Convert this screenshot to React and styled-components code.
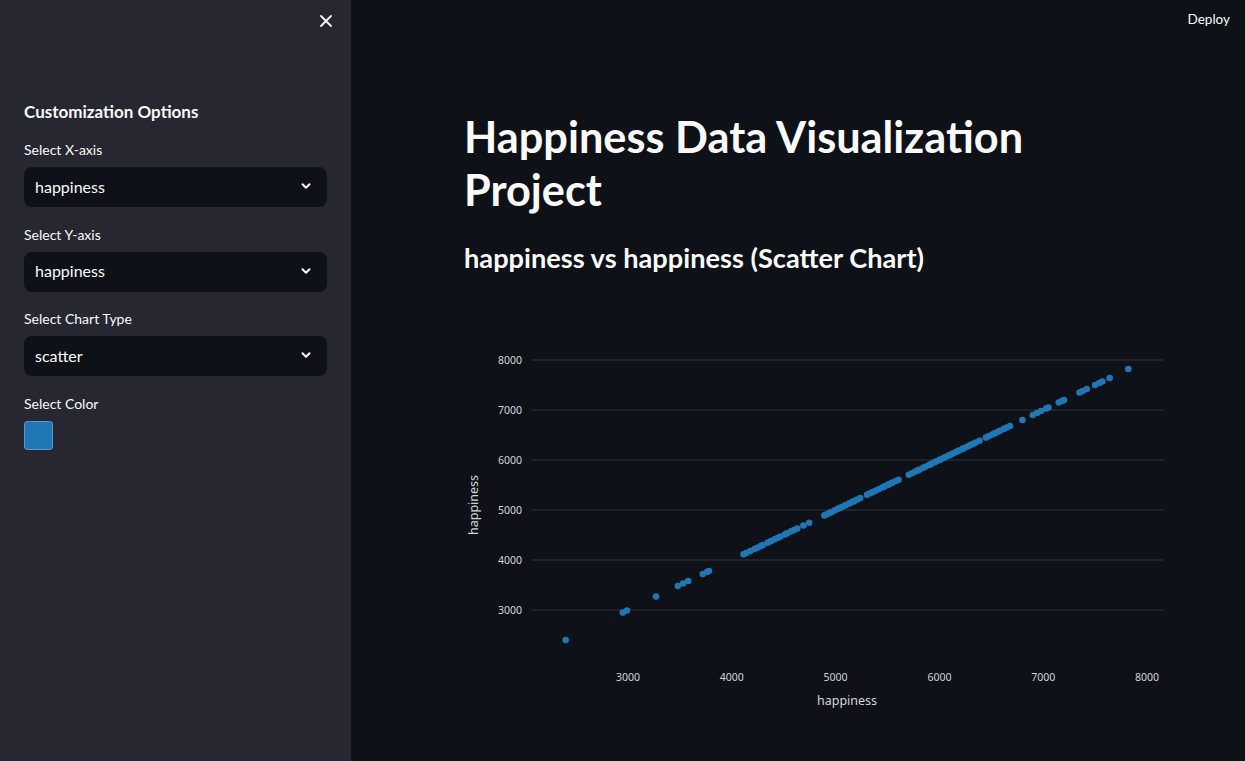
import React from "react";
import styled, { createGlobalStyle } from "styled-components";

const Global = createGlobalStyle`
  html, body { margin: 0; padding: 0; background: #0e1117; }
  body { font-family: "Source Sans Pro", Lato, "Noto Sans", sans-serif; color: #fafafa; }
  * { box-sizing: border-box; }
`;

const Page = styled.div`
  display: flex;
  width: 1245px;
  height: 761px;
  overflow: hidden;
`;

const Sidebar = styled.aside`
  width: 351px;
  flex: none;
  background: #262730;
  display: flex;
  flex-direction: column;
  padding: 0 24px;
`;

const SideTop = styled.div`
  height: 42px;
  display: flex;
  justify-content: flex-end;
  align-items: center;
`;

const CloseBtn = styled.button`
  background: none;
  border: 0;
  padding: 0;
  width: 16px;
  height: 16px;
  margin-right: -7px;
  display: flex;
  align-items: center;
  justify-content: center;
  color: #fafafa;
`;

const SideHeading = styled.h2`
  margin: 56px 0 0;
  font-size: 17px;
  font-weight: 700;
  line-height: 28px;
`;

const Fields = styled.div`
  margin-top: 14px;
  display: flex;
  flex-direction: column;
  gap: 17.7px;
`;

const Field = styled.div`
  display: flex;
  flex-direction: column;
`;

const Label = styled.label`
  font-size: 14px;
  line-height: 20px;
  margin-bottom: 7px;
  color: #fafafa;
`;

const Select = styled.div`
  height: 40px;
  border-radius: 8px;
  background: #0e1117;
  display: flex;
  align-items: center;
  justify-content: space-between;
  padding: 0 15px 2px 11px;
  font-size: 16px;
  color: #fafafa;
`;

const Swatch = styled.div`
  width: 29px;
  height: 29px;
  border-radius: 4px;
  background: ${(p) => p.$color};
  border: 1px solid rgba(255, 255, 255, 0.25);
`;

const Main = styled.main`
  flex: 1;
  position: relative;
  background: #0e1117;
  display: flex;
  flex-direction: column;
`;

const Header = styled.header`
  height: 38px;
  display: flex;
  justify-content: flex-end;
  align-items: center;
  padding-right: 15px;
`;

const DeployBtn = styled.span`
  font-size: 13.5px;
  color: #fafafa;
`;

const Content = styled.div`
  margin-left: 113px;
  width: 704px;
  display: flex;
  flex-direction: column;
`;

const Title = styled.h1`
  margin: 72px 0 0;
  font-size: 43.3px;
  font-weight: 700;
  line-height: 53px;
  width: 600px;
`;

const Subtitle = styled.h3`
  margin: 25px 0 0;
  font-size: 27.2px;
  font-weight: 700;
  line-height: 34px;
`;

const ChartWrap = styled.div`
  margin-top: 25px;
  height: 430px;
`;

function Chevron() {
  return (
    <svg width="12" height="12" viewBox="0 0 12 12">
      <path d="M2.5 4.3 L6 7.8 L9.5 4.3" fill="none" stroke="#fafafa" strokeWidth="2" strokeLinecap="round" strokeLinejoin="round" />
    </svg>
  );
}

function makeData() {
  let s = 12345;
  const rnd = () => {
    s = (s * 1103515245 + 12345) % 2147483648;
    return s / 2147483648;
  };
  const vals = [2400, 2950, 2990, 3270, 3480, 3530, 3580, 3720, 3760, 3780];
  const range = (a, b, n) => {
    for (let i = 0; i < n; i++) vals.push(a + ((b - a) * (i + rnd() * 0.6)) / n);
  };
  range(4100, 4660, 17);
  vals.push(4690, 4745);
  range(4880, 5250, 14);
  range(5300, 5620, 12);
  range(5700, 6400, 26);
  range(6440, 6700, 9);
  vals.push(6800, 6900, 6940, 6980, 7030, 7050, 7150, 7180, 7200, 7350, 7380, 7420, 7500, 7540, 7570, 7640, 7820);
  return vals;
}
const DATA = makeData();

const px = (v) => 164 + (v - 3000) * 0.1038;
const py = (v) => 60 + (8000 - v) * 0.05;

function Chart() {
  const yt = [8000, 7000, 6000, 5000, 4000, 3000];
  const xt = [3000, 4000, 5000, 6000, 7000, 8000];
  const tickFont = { fontFamily: "'Noto Sans', sans-serif", fontSize: 10.5, fill: "#d3d4d8" };
  const titleFont = { fontFamily: "'Noto Sans', sans-serif", fontSize: 12.5, fill: "#d3d4d8" };
  return (
    <svg width="704" height="430" viewBox="0 0 704 430">
      {yt.map((v) => (
        <g key={v}>
          <line x1="67" x2="700" y1={py(v)} y2={py(v)} stroke="#32353e" strokeWidth="1" />
          <text x="58" y={py(v) + 4} textAnchor="end" style={tickFont}>{v}</text>
        </g>
      ))}
      {xt.map((v) => (
        <text key={v} x={px(v)} y="381" textAnchor="middle" style={tickFont}>{v}</text>
      ))}
      {DATA.map((v, i) => (
        <circle key={i} cx={px(v)} cy={py(v)} r="3.3" fill="#1f77b4" />
      ))}
      <text x="383" y="405" textAnchor="middle" style={titleFont}>happiness</text>
      <text transform="translate(14 205) rotate(-90)" textAnchor="middle" style={titleFont}>happiness</text>
    </svg>
  );
}

const fields = [
  { label: "Select X-axis", value: "happiness" },
  { label: "Select Y-axis", value: "happiness" },
  { label: "Select Chart Type", value: "scatter" },
];

export default function App() {
  return (
    <Page>
      <Global />
      <Sidebar>
        <SideTop>
          <CloseBtn aria-label="close">
            <svg width="14" height="14" viewBox="0 0 14 14">
              <path d="M2 2 L12 12 M12 2 L2 12" stroke="#fafafa" strokeWidth="1.8" strokeLinecap="round" />
            </svg>
          </CloseBtn>
        </SideTop>
        <SideHeading>Customization Options</SideHeading>
        <Fields>
          {fields.map((f) => (
            <Field key={f.label}>
              <Label>{f.label}</Label>
              <Select>
                <span>{f.value}</span>
                <Chevron />
              </Select>
            </Field>
          ))}
          <Field>
            <Label>Select Color</Label>
            <Swatch $color="#1f77b4" />
          </Field>
        </Fields>
      </Sidebar>
      <Main>
        <Header>
          <DeployBtn>Deploy</DeployBtn>
        </Header>
        <Content>
          <Title>Happiness Data Visualization Project</Title>
          <Subtitle>happiness vs happiness (Scatter Chart)</Subtitle>
          <ChartWrap>
            <Chart />
          </ChartWrap>
        </Content>
      </Main>
    </Page>
  );
}
